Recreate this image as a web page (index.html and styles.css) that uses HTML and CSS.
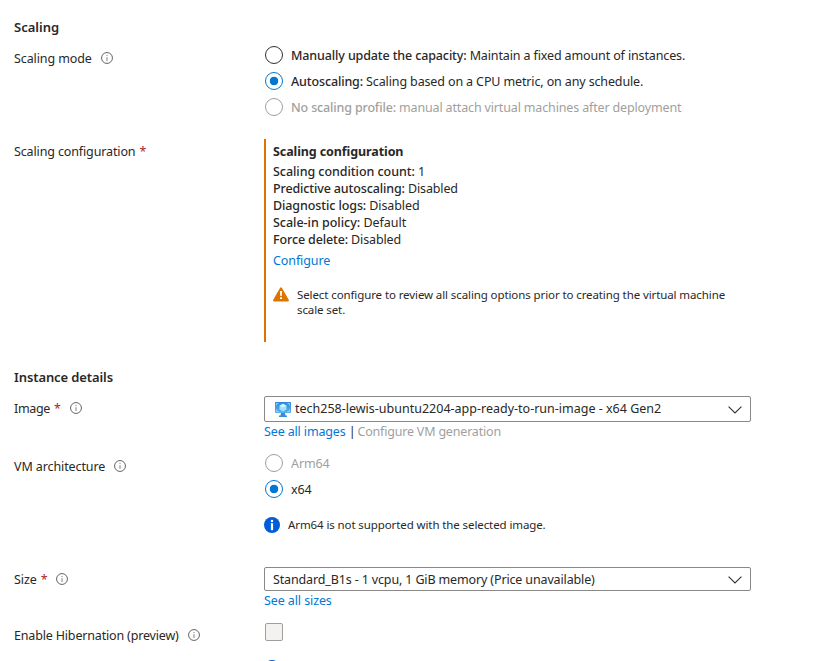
FILE: index.html
```html
<!DOCTYPE html>
<html lang="en">
<head>
<meta charset="utf-8">
<title>Create a virtual machine scale set</title>
<link rel="stylesheet" href="styles.css">
</head>
<body>
<svg class="defs" aria-hidden="true">
  <symbol id="info-outline" viewBox="0 0 12 12"><circle cx="6" cy="6" r="5.45" fill="none" stroke="#605e5c" stroke-width=".95"/><path d="M6 5.2V9M6 3v1.1" stroke="#85827f" stroke-width="1"/></symbol>
  <symbol id="info-solid" viewBox="0 0 16 16"><circle cx="8" cy="8" r="8" fill="#015cda"/><circle cx="8" cy="3.9" r="1.25" fill="#fff"/><path d="M6.900 6.200h2.200v7H6.900z" fill="#fff"/></symbol>
  <symbol id="chevron" viewBox="0 0 14 8"><path d="M.6.7 7 7 13.400.7" fill="none" stroke="#323130" stroke-width="1.100"/></symbol>
</svg>
<main class="form">
  <h2 class="heading"><span class="t-scaling">Scaling</span></h2>
  <section class="row row-mode">
    <div class="label"><span class="t-mode">Scaling mode</span><svg class="info"><use href="#info-outline"/></svg></div>
    <div class="radios">
      <div class="option"><i class="radio"></i><span class="t-manual"><b>Manually update the capacity:</b> Maintain a fixed amount of instances.</span></div>
      <div class="option"><i class="radio checked"></i><span class="t-auto"><b>Autoscaling:</b> Scaling based on a CPU metric, on any schedule.</span></div>
      <div class="option disabled"><i class="radio"></i><span class="t-none"><b>No scaling profile:</b> manual attach virtual machines after deployment</span></div>
    </div>
  </section>
  <section class="row row-config">
    <div class="label"><span class="t-config">Scaling configuration</span><span class="req">*</span></div>
    <div class="config">
      <h3 class="config-title"><span class="t-title">Scaling configuration</span></h3>
      <div class="line"><span class="t-count"><b>Scaling condition count:</b> 1</span></div>
      <div class="line"><span class="t-pred"><b>Predictive autoscaling:</b> Disabled</span></div>
      <div class="line"><span class="t-diag"><b>Diagnostic logs:</b> Disabled</span></div>
      <div class="line"><span class="t-policy"><b>Scale-in policy:</b> Default</span></div>
      <div class="line"><span class="t-force"><b>Force delete:</b> Disabled</span></div>
      <a class="link configure"><span class="t-configure">Configure</span></a>
      <div class="warning">
        <svg class="warn-icon" viewBox="0 0 16 15"><path d="M7 .9Q8-.6 9 .9l6.700 11.800q.7 1.600-.9 1.800H1.200Q-.4 14.300.3 12.700z" fill="#db7500"/><path d="M7 4h2l-.3 5H7.300zM7 10.300h2v1.800H7z" fill="#fff"/></svg>
        <p><span class="t-warn">Select configure to review all scaling options prior to creating the virtual machine</span><br><span class="t-warn2">scale set.</span></p>
      </div>
    </div>
  </section>
  <h2 class="heading"><span class="t-instance">Instance details</span></h2>
  <section class="row row-image">
    <div class="label"><span class="t-image">Image</span><span class="req">*</span><svg class="info"><use href="#info-outline"/></svg></div>
    <div>
      <div class="select select-image">
        <svg class="vm-icon" viewBox="0 0 16 15"><defs><linearGradient id="screen" x2="0" y2="1"><stop stop-color="#2f86dc"/><stop offset="1" stop-color="#5bb4ef"/></linearGradient></defs><rect width="16" height="11" rx=".7" fill="url(#screen)"/><path d="M6 11h4l.5 2.500H12V15H4v-1.500h1.500z" fill="#3a8bd8"/><path d="M1.500 3.500v-2h2M12.500 1.500h2v2M14.500 7.500v2h-2M3.500 9.500h-2v-2" fill="none" stroke="#a9dcfb" stroke-width=".8"/><path d="M8 1.800 11.500 3.700v3.700L8 9.400 4.500 7.400V3.700z" fill="#9fe3fb"/><path d="M8 1.800 11.500 3.700 8 5.600 4.500 3.700z" fill="#d5f5ff"/></svg>
        <span class="value t-vm">tech258-lewis-ubuntu2204-app-ready-to-run-image - x64 Gen2</span>
        <svg class="chevron"><use href="#chevron"/></svg>
      </div>
      <div class="links"><a class="link t-images">See all images</a><span class="sep">|</span><span class="disabled t-gen">Configure VM generation</span></div>
    </div>
  </section>
  <section class="row row-arch">
    <div class="label"><span class="t-arch">VM architecture</span><svg class="info"><use href="#info-outline"/></svg></div>
    <div class="radios">
      <div class="option disabled"><i class="radio"></i><span class="t-arm">Arm64</span></div>
      <div class="option"><i class="radio checked"></i><span class="t-x64">x64</span></div>
      <div class="note"><svg class="note-icon"><use href="#info-solid"/></svg><span class="t-note">Arm64 is not supported with the selected image.</span></div>
    </div>
  </section>
  <section class="row row-size">
    <div class="label"><span class="t-size">Size</span><span class="req">*</span><svg class="info"><use href="#info-outline"/></svg></div>
    <div>
      <div class="select">
        <span class="value t-std">Standard_B1s - 1 vcpu, 1 GiB memory (Price unavailable)</span>
        <svg class="chevron"><use href="#chevron"/></svg>
      </div>
      <div class="links"><a class="link t-sizes">See all sizes</a></div>
    </div>
  </section>
  <section class="row row-hibernate">
    <div class="label"><span class="t-hib">Enable Hibernation (preview)</span><svg class="info"><use href="#info-outline"/></svg></div>
    <div>
      <div class="checkbox"></div>
      <svg class="note-icon next-note"><use href="#info-solid"/></svg>
    </div>
  </section>
</main>
</body>
</html>
```
FILE: styles.css
```css
* { box-sizing: border-box; }
html, body { height: 661px; margin: 0; overflow: hidden; background: #fff; }
body { font: 12.5px/18px "Noto Sans", "Open Sans", sans-serif; color: #292827; letter-spacing: -.1px; }
h2, h3, p { margin: 0; font-size: inherit; }
b { font-weight: 500; }
svg { display: block; flex: none; }
span { white-space: nowrap; }
.defs { position: absolute; width: 0; height: 0; }
.form { padding: 18px 0 0 14px; width: 751px; }
.heading { height: 18px; font-size: 13px; font-weight: 600; letter-spacing: -.1px; }
.row { display: grid; grid-template-columns: 250px 487px; }
.label { display: flex; height: 22px; padding-top: 4px; }
.req { color: #a4262c; margin-left: 4px; }
.info { width: 12px; height: 12px; margin: 2px 0 0 9px; }

.row-mode { margin-top: 10px; }
.option { display: flex; height: 18px; align-items: center; margin-bottom: 8px; }
.option span { padding-top: 2px; }
.radio { width: 18px; height: 18px; margin: 0 8px 0 1px; border: 1px solid #323130; border-radius: 50%; flex: none; }
.radio.checked { border-color: #0078d4; background: radial-gradient(circle, #0078d4 0 4px, transparent 4.600px); }
.disabled { color: #a19f9d; }
.disabled .radio { border-color: #a19f9d; }

.row-config { margin-top: 15px; height: 203px; }
.config { border-left: 2px solid #db7500; padding: 4px 0 0 7px; line-height: 17px; }
.config-title { height: 20px; font-weight: 700; }
.line { height: 17px; }
.link { color: #0078d4; }
.configure { display: block; margin-top: 4px; }
.warning { display: flex; margin-top: 18px; font-size: 11.500px; line-height: 15px; }
.warn-icon { width: 16px; height: 15px; margin-right: 8px; }

.row-config + .heading { margin-top: 26px; }
.row-image { margin-top: 10px; }
.select { display: flex; align-items: center; height: 24px; padding: 0 8px; border: 1px solid #8a8886; border-radius: 2px; }
.select-image { height: 26px; padding-left: 10px; }
.vm-icon { width: 16px; height: 15px; margin-right: 4px; }
.value { flex: 1; }
.select:not(.select-image) .value { padding-top: 1px; }
.chevron { width: 14px; height: 8px; margin-top: 1px; }
.links { display: flex; height: 18px; margin-top: 1px; }
.sep { margin: 0 2px 0 3px; }

.row-arch { margin-top: 13px; }
.note { display: flex; align-items: center; height: 16px; margin-top: 19px; font-size: 11.500px; }
.note-icon { width: 16px; height: 16px; margin-right: 8px; }

.row-size { margin-top: 34px; }
.row-hibernate { margin-top: 13px; }
.checkbox { width: 18px; height: 18px; margin-left: 1px; border: 1px solid #a19f9d; border-radius: 2px; background: #f3f2f1; }
.next-note { margin-top: 19px; }

/* Optical tracking per string */
.t-scaling { letter-spacing: 0; }
.t-config, .t-manual, .t-auto, .t-pred, .t-force { letter-spacing: -.13px; }
.t-none { letter-spacing: -.15px; }
.t-image { letter-spacing: -.35px; }
.t-hib { letter-spacing: -.17px; }
.t-vm { letter-spacing: 0; }
.t-gen { letter-spacing: -.19px; }
.t-images, .t-std { letter-spacing: -.14px; }
.t-count { letter-spacing: -.05px; }
.t-policy { letter-spacing: -.02px; }
```
